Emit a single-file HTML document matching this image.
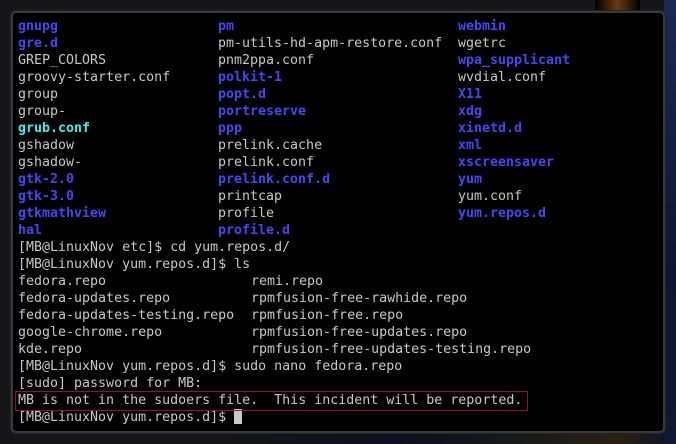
<!DOCTYPE html>
<html><head><style>
html,body{margin:0;padding:0;width:676px;height:444px;overflow:hidden;background:#161618;}
.bgr{position:absolute;left:664px;top:0;width:12px;height:444px;background:linear-gradient(#1a2a55,#0d1530 60%,#101830);}
.bgo{position:absolute;left:595px;top:0;width:45px;height:12px;background:linear-gradient(90deg,#000,#6a3a10,#000);}
.bgb{position:absolute;left:220px;top:432px;width:444px;height:12px;background:linear-gradient(90deg,#161618,#0c1020 40%,#1a1a1a 70%,#2a2010 90%,#101525);}
.box{position:absolute;left:11px;top:11px;width:650px;height:418px;border:2px solid #3a3a3a;border-radius:5px;background:#000;box-shadow:0 0 0 1px #222;}
.t{position:absolute;font-family:"DejaVu Sans Mono","Liberation Mono",monospace;font-size:13.3px;line-height:17px;color:#c8c8c8;white-space:pre;}
.b{color:#4646f5;font-weight:bold}
.c{color:#3cf0f0;font-weight:bold}
.hl{position:absolute;left:15px;top:391px;width:511px;height:18px;border:1px solid #8a1a1a;}
.cur{display:inline-block;width:8px;height:15px;background:#c8c8c8;vertical-align:-3px}
</style></head><body>
<div class="bgr"></div><div class="bgo"></div><div class="bgb"></div>
<div class="box"></div>
<div class="t" style="left:18px;top:18px"><span class="b">gnupg</span>
<span class="b">gre.d</span>
GREP_COLORS
groovy-starter.conf
group
group-
<span class="c">grub.conf</span>
gshadow
gshadow-
<span class="b">gtk-2.0</span>
<span class="b">gtk-3.0</span>
<span class="b">gtkmathview</span>
<span class="b">hal</span>
[MB@LinuxNov etc]$ cd yum.repos.d/
[MB@LinuxNov yum.repos.d]$ ls
fedora.repo
fedora-updates.repo
fedora-updates-testing.repo
google-chrome.repo
kde.repo
[MB@LinuxNov yum.repos.d]$ sudo nano fedora.repo
[sudo] password for MB:
MB is not in the sudoers file.  This incident will be reported.
[MB@LinuxNov yum.repos.d]$ <span class="cur"></span></div>
<div class="t" style="left:218px;top:18px"><span class="b">pm</span>
pm-utils-hd-apm-restore.conf
pnm2ppa.conf
<span class="b">polkit-1</span>
<span class="b">popt.d</span>
<span class="b">portreserve</span>
<span class="b">ppp</span>
prelink.cache
prelink.conf
<span class="b">prelink.conf.d</span>
printcap
profile
<span class="b">profile.d</span></div>
<div class="t" style="left:458px;top:18px"><span class="b">webmin</span>
wgetrc
<span class="b">wpa_supplicant</span>
wvdial.conf
<span class="b">X11</span>
<span class="b">xdg</span>
<span class="b">xinetd.d</span>
<span class="b">xml</span>
<span class="b">xscreensaver</span>
<span class="b">yum</span>
yum.conf
<span class="b">yum.repos.d</span></div>
<div class="t" style="left:251px;top:273px">remi.repo
rpmfusion-free-rawhide.repo
rpmfusion-free.repo
rpmfusion-free-updates.repo
rpmfusion-free-updates-testing.repo</div>
<div class="hl"></div>
</body></html>
